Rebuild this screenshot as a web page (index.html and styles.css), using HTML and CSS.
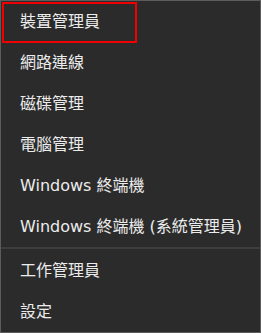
FILE: index.html
```html
<!DOCTYPE html>
<html lang="zh-Hant">
<head>
    <meta charset="UTF-8">
    <meta name="viewport" content="width=device-width, initial-scale=1.0">
    <title>WinX Menu</title>
    <link rel="stylesheet" href="styles.css">
</head>
<body>

    <!-- Win+X context menu -->
    <div class="menu">
        <div class="item highlighted">裝置管理員<span class="mark"></span></div>
        <div class="item">網路連線</div>
        <div class="item">磁碟管理</div>
        <div class="item">電腦管理</div>
        <div class="item">Windows 終端機</div>
        <div class="item">Windows 終端機 (系統管理員)</div>
        <div class="sep"></div>
        <div class="item">工作管理員</div>
        <div class="item">設定</div>
    </div>

</body>
</html>
```

FILE: styles.css
```css
body {
    margin: 0;
    background: #2b2b2b;
    font-family: "DejaVu Sans", "Noto Sans CJK TC", sans-serif;
    color: #ececec;
}
.menu {
    width: 259px;
    height: 331px;
    border: 1px solid #5c5c5c;
    background: #2b2b2b;
}
.item {
    position: relative;
    height: 41px;
    line-height: 41px;
    padding-left: 19px;
    font-size: 16px;
    white-space: nowrap;
}
.mark {
    position: absolute;
    left: 1px;
    top: 1px;
    width: 131px;
    height: 37px;
    border: 2px solid #f00000;
}
.sep {
    height: 3px;
    border-top: 2px solid #3d3d3d;
    box-sizing: border-box;
}
```
